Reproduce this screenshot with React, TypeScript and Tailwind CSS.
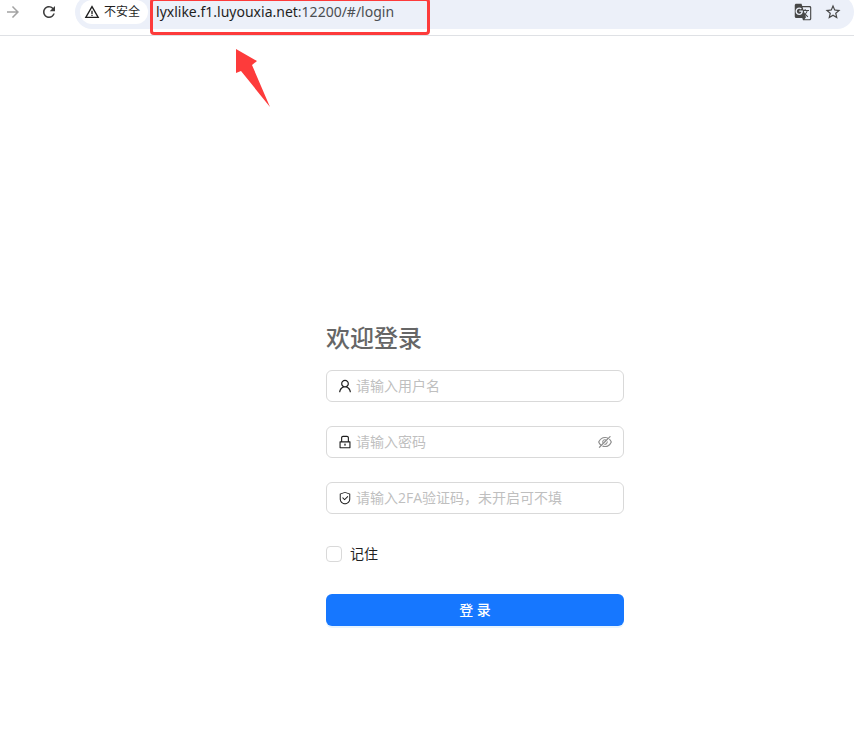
import { useState } from 'react';
import type { InputHTMLAttributes, ReactNode } from 'react';
import {
  AiOutlineEyeInvisible,
  AiOutlineLock,
  AiOutlineSafety,
  AiOutlineUser,
} from 'react-icons/ai';
import {
  MdArrowForward,
  MdGTranslate,
  MdRefresh,
  MdStarBorder,
  MdWarningAmber,
} from 'react-icons/md';

function AddressBar() {
  return (
    <header className="flex h-9 flex-col border-b border-[#dfe1e5] bg-white">
      <div className="-mt-[5px] flex h-[34px] shrink-0 items-center">
        <button type="button" aria-label="前进" className="ml-1 text-[#a3a3a3]">
          <MdArrowForward size={18} />
        </button>
        <button type="button" aria-label="重新加载" className="ml-[18px] text-[#3c3c3c]">
          <MdRefresh size={18} />
        </button>
        <div className="ml-[17px] flex h-full flex-1 items-center rounded-full bg-[#ecf0f9] pr-3 pl-[5px]">
          <button
            type="button"
            className="flex h-6 items-center gap-1 rounded-full bg-white pr-2 pl-1 text-xs text-[#1f1f1f]"
          >
            <MdWarningAmber size={16} />
            不安全
          </button>
          <div className="relative ml-2 flex-1 font-['Noto_Sans',sans-serif] text-sm text-[#4b4e52]">
            <span className="text-[#1f1f1f]">lyxlike.f1.luyouxia.net</span>
            :12200/#/login
            <div className="absolute -top-1 -left-1.5 h-[37px] w-[280px] rounded-sm border-3 border-[#fd3b3b]" />
            <svg
              viewBox="0 0 34 58"
              className="absolute top-[47px] left-20 h-[58px] w-[34px]"
              fill="#fd3b3b"
              aria-hidden="true"
            >
              <path d="M0 0 L21 12 L16 16 L34 58 L5 22 L0 24 Z" />
            </svg>
          </div>
          <button type="button" aria-label="翻译" className="text-[#474747]">
            <MdGTranslate size={18} />
          </button>
          <button type="button" aria-label="收藏" className="ml-3 text-[#474747]">
            <MdStarBorder size={18} />
          </button>
        </div>
      </div>
    </header>
  );
}

interface FieldProps extends InputHTMLAttributes<HTMLInputElement> {
  icon: ReactNode;
  suffix?: ReactNode;
}

function Field({ icon, suffix, ...input }: FieldProps) {
  return (
    <label className="flex h-8 items-center gap-[3px] rounded-md border border-[#d9d9d9] px-2.5 text-[#1f1f1f]">
      <span className="flex w-4 justify-center">{icon}</span>
      <input
        {...input}
        aria-label={input.placeholder}
        className="min-w-0 flex-1 bg-transparent text-sm outline-none placeholder:text-[#bfbfbf]"
      />
      {suffix}
    </label>
  );
}

export default function App() {
  const [visible, setVisible] = useState(false);

  return (
    <div className="min-h-screen overflow-hidden bg-white font-['Open_Sans','Noto_Sans_CJK_SC',sans-serif]">
      <AddressBar />
      <main className="flex justify-center pt-[286px] pl-24">
        <form className="flex w-[298px] flex-col gap-6" onSubmit={(e) => e.preventDefault()}>
          <h1 className="-mb-2 text-2xl font-medium text-[#666666]">欢迎登录</h1>
          <Field icon={<AiOutlineUser size={16} />} type="text" placeholder="请输入用户名" />
          <Field
            icon={<AiOutlineLock size={16} />}
            type={visible ? 'text' : 'password'}
            placeholder="请输入密码"
            suffix={
              <button
                type="button"
                aria-label="显示密码"
                className="text-[#8c8c8c]"
                onClick={() => setVisible(!visible)}
              >
                <AiOutlineEyeInvisible size={16} />
              </button>
            }
          />
          <Field
            icon={<AiOutlineSafety size={14} />}
            type="text"
            placeholder="请输入2FA验证码，未开启可不填"
          />
          <label className="flex h-8 items-center gap-2 text-sm text-[#1f1f1f]">
            <input
              type="checkbox"
              className="size-4 appearance-none rounded-sm border border-[#d9d9d9] bg-white checked:border-[#1677ff] checked:bg-[#1677ff]"
            />
            记住
          </label>
          <button
            type="submit"
            className="h-8 rounded-md bg-[#1677ff] text-sm font-medium text-white shadow-[0_2px_0_rgba(5,145,255,0.1)]"
          >
            登 录
          </button>
        </form>
      </main>
    </div>
  );
}
